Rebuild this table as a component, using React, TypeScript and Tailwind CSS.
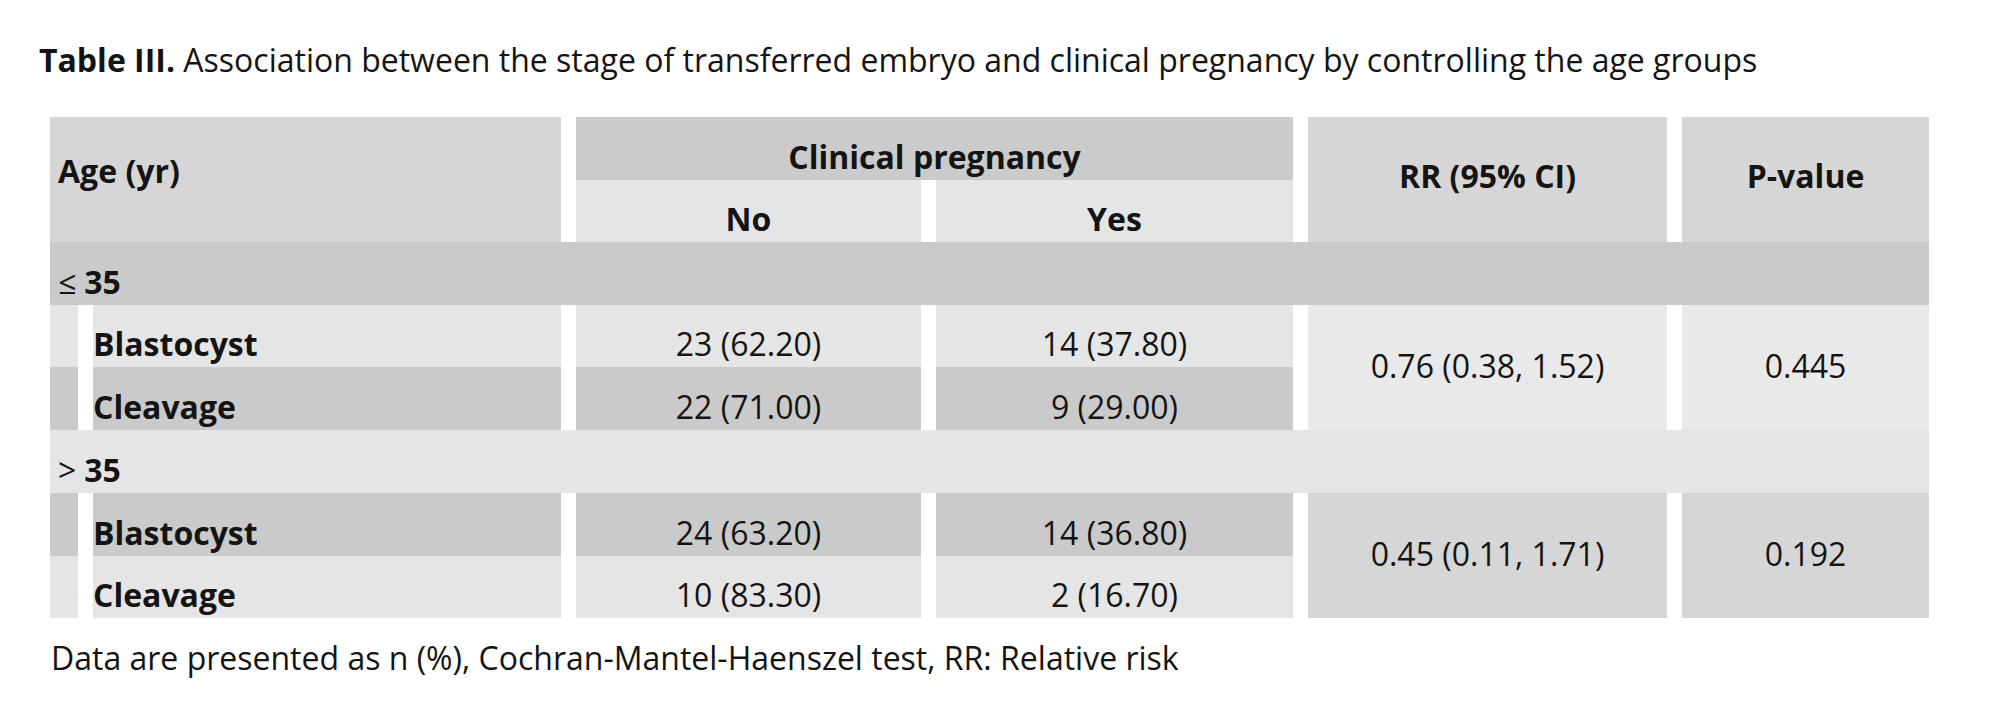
import React from 'react'

const font = { fontFamily: '"Open Sans", "Liberation Sans", sans-serif' }

type Row = { label: string; no: string; yes: string; tone: 'dark' | 'light' }

const groups: {
  sign: string
  tone: 'dark' | 'light'
  rr: string
  p: string
  rrTone: string
  rows: Row[]
}[] = [
  {
    sign: '≤',
    tone: 'dark',
    rr: '0.76 (0.38, 1.52)',
    p: '0.445',
    rrTone: 'bg-[#e9e9e9]',
    rows: [
      { label: 'Blastocyst', no: '23 (62.20)', yes: '14 (37.80)', tone: 'light' },
      { label: 'Cleavage', no: '22 (71.00)', yes: '9 (29.00)', tone: 'dark' },
    ],
  },
  {
    sign: '>',
    tone: 'light',
    rr: '0.45 (0.11, 1.71)',
    p: '0.192',
    rrTone: 'bg-[#d6d6d6]',
    rows: [
      { label: 'Blastocyst', no: '24 (63.20)', yes: '14 (36.80)', tone: 'dark' },
      { label: 'Cleavage', no: '10 (83.30)', yes: '2 (16.70)', tone: 'light' },
    ],
  },
]

const toneBg = (t: 'dark' | 'light') => (t === 'dark' ? 'bg-[#cacaca]' : 'bg-[#e5e5e5]')

const App: React.FC = () => {
  return (
    <div className="w-[2000px] h-[722px] bg-white text-[#141414] overflow-hidden" style={font}>
      <div className="pt-[42px] pl-[39px] text-[32px] leading-[36px]">
        <span className="font-bold">Table III.</span> Association between the stage of transferred embryo and clinical pregnancy by controlling the age groups
      </div>

      <div className="ml-[50px] mt-[39px] grid grid-cols-[28px_15px_468px_15px_345px_15px_357px_15px_359px_15px_247px] grid-rows-[63px_62px_63px_62px_63px_63px_63px_62px] text-[32px] leading-none">
        {/* header */}
        <div className="col-start-1 col-span-3 row-start-1 row-span-2 bg-[#d6d6d6] flex items-center pl-2 pb-[17px] font-bold">
          Age (yr)
        </div>
        <div className="col-start-5 col-span-3 row-start-1 bg-[#cbcbcb] flex items-center justify-center pt-4 font-bold">
          Clinical pregnancy
        </div>
        <div className="col-start-5 row-start-2 bg-[#e5e5e5] flex items-center justify-center pt-4 font-bold">No</div>
        <div className="col-start-7 row-start-2 bg-[#e5e5e5] flex items-center justify-center pt-4 font-bold">Yes</div>
        <div className="col-start-9 row-start-1 row-span-2 bg-[#d6d6d6] flex items-center justify-center pb-[7px] font-bold">
          RR (95% CI)
        </div>
        <div className="col-start-11 row-start-1 row-span-2 bg-[#d6d6d6] flex items-center justify-center pb-[7px] font-bold">
          P-value
        </div>

        {groups.map((g, gi) => {
          const base = 3 + gi * 3
          return (
            <React.Fragment key={gi}>
              <div
                className={`col-start-1 col-span-11 ${toneBg(g.tone)} flex items-center pl-2 pt-4`}
                style={{ gridRowStart: base }}
              >
                <span>{g.sign}</span>
                <span className="font-bold ml-[8px]">35</span>
              </div>
              {g.rows.map((r, ri) => (
                <React.Fragment key={ri}>
                  <div className={`col-start-1 ${toneBg(r.tone)}`} style={{ gridRowStart: base + 1 + ri }} />
                  <div
                    className={`col-start-3 ${toneBg(r.tone)} flex items-center pt-4 font-bold`}
                    style={{ gridRowStart: base + 1 + ri }}
                  >
                    {r.label}
                  </div>
                  <div
                    className={`col-start-5 ${toneBg(r.tone)} flex items-center justify-center pt-4`}
                    style={{ gridRowStart: base + 1 + ri }}
                  >
                    {r.no}
                  </div>
                  <div
                    className={`col-start-7 ${toneBg(r.tone)} flex items-center justify-center pt-4`}
                    style={{ gridRowStart: base + 1 + ri }}
                  >
                    {r.yes}
                  </div>
                </React.Fragment>
              ))}
              <div
                className={`col-start-9 row-span-2 ${g.rrTone} flex items-center justify-center pb-1`}
                style={{ gridRowStart: base + 1 }}
              >
                {g.rr}
              </div>
              <div
                className={`col-start-11 row-span-2 ${g.rrTone} flex items-center justify-center pb-1`}
                style={{ gridRowStart: base + 1 }}
              >
                {g.p}
              </div>
            </React.Fragment>
          )
        })}
      </div>

      <div className="pl-[51px] mt-[22px] text-[32px] leading-[36px]">
        Data are presented as n (%), Cochran-Mantel-Haenszel test, RR: Relative risk
      </div>
    </div>
  )
}

export default App
